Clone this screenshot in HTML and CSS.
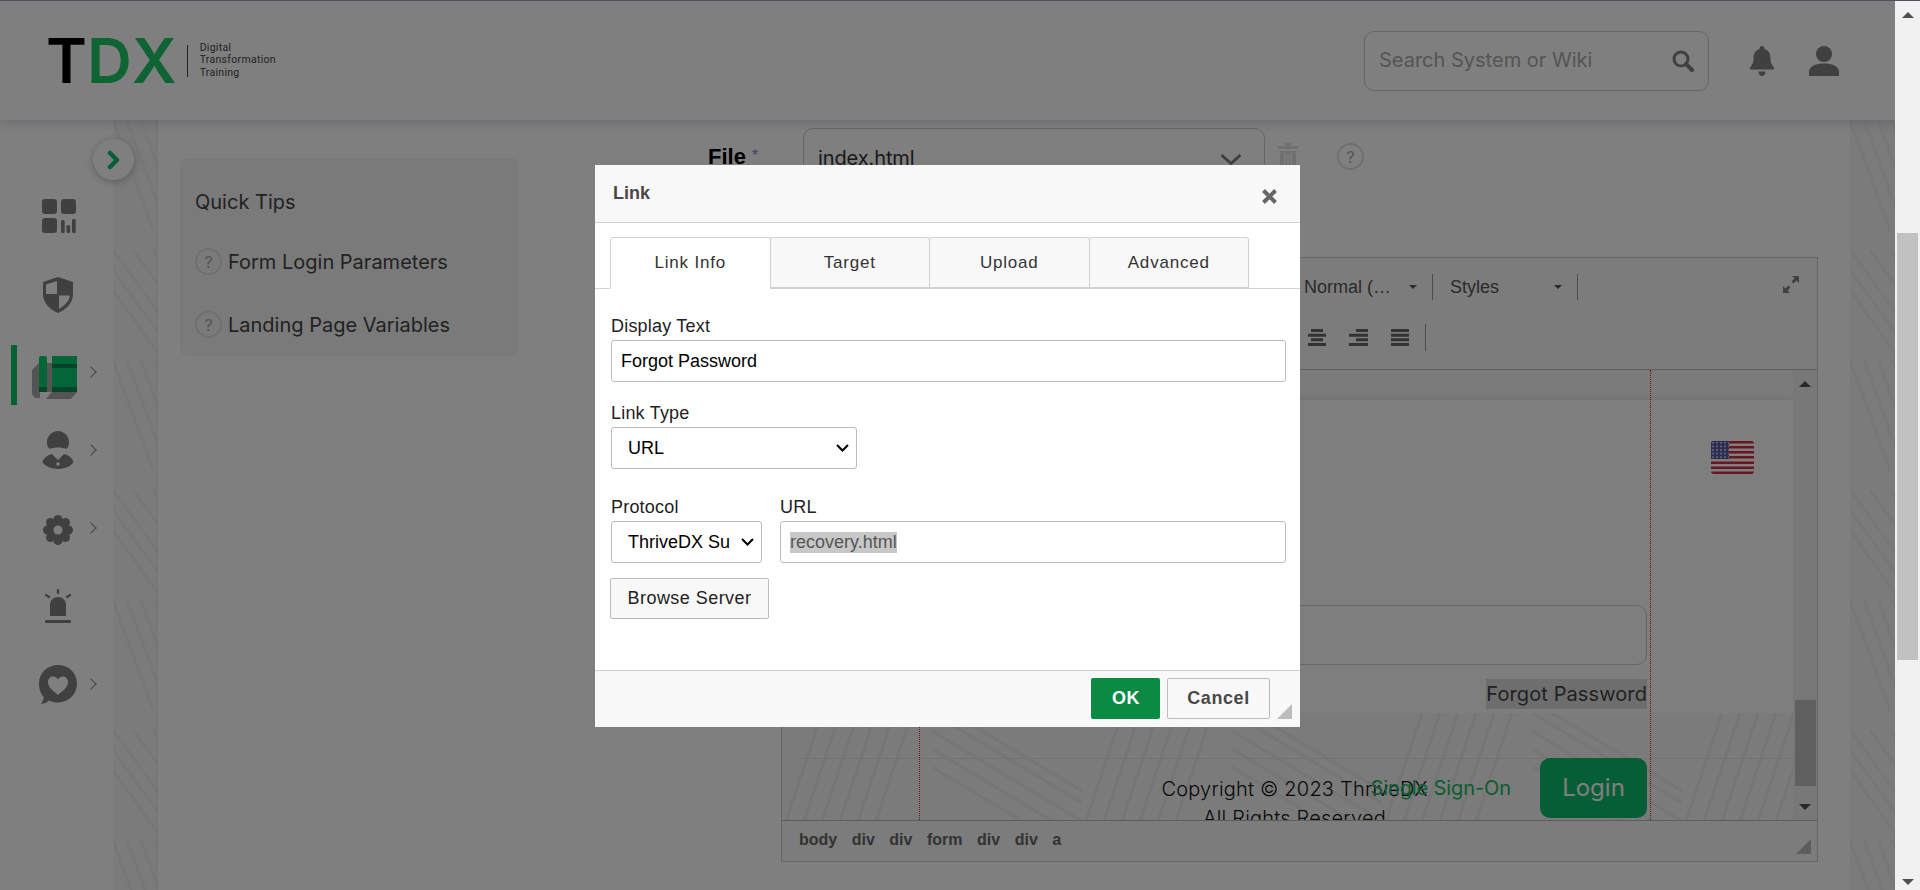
FILE: index.html
```html
<!DOCTYPE html>
<html lang="en">
<head>
  <meta charset="UTF-8">
  <title>TDX - Landing Page</title>
  <link rel="stylesheet" href="styles.css">
</head>
<body>
<div class="app">
  <div class="page">
    <header class="topbar">
      <div class="logo">
        <div class="logo-mark"><span class="logo-t">T</span><span class="logo-d">D</span><span class="logo-x">X</span></div>
        <span class="logo-divider"></span>
        <div class="logo-text">Digital<br>Transformation<br>Training</div>
      </div>
      <div class="search">
        <span class="search-text">Search System or Wiki</span>
        <svg width="22" height="22" viewBox="0 0 22 22"><circle cx="9" cy="9" r="7" fill="none" stroke="#808080" stroke-width="3"/><path d="M14 14l6 6" stroke="#808080" stroke-width="4" stroke-linecap="round"/></svg>
      </div>
      <svg class="bell" width="24" height="30" viewBox="0 0 24 30"><path d="M12 0c1.500 0 2.500 1 2.500 3 4.500 1.500 6 5 6 9.500 0 4 1 6.500 3.500 9v2H0v-2c2.500-2.500 3.500-5 3.500-9C3.500 8 5 4.500 9.500 3 9.500 1 10.500 0 12 0zM8.500 25.500h7C15.500 28 14 30 12 30s-3.500-2-3.500-4.500z" fill="#808080"/></svg>
      <svg class="user" width="30" height="30" viewBox="0 0 30 30"><circle cx="15" cy="8" r="8" fill="#808080"/><path d="M0 30v-4c0-6 7-8.500 15-8.500S30 20 30 26v4z" fill="#808080"/></svg>
    </header>

    <div class="content">
      <nav class="sidenav">
        <div class="nav-toggle"><svg width="14" height="20" viewBox="0 0 14 20"><path d="M3 3l7 7-7 7" fill="none" stroke="#0abc6a" stroke-width="4.500" stroke-linecap="round" stroke-linejoin="round"/></svg></div>
        <div class="nav-item">
          <svg class="nav-icon" width="52" height="34" viewBox="0 0 52 34"><g fill="#808080"><rect x="10" y="0" width="15" height="15" rx="3"/><rect x="29" y="0" width="15" height="15" rx="3"/><rect x="10" y="19" width="15" height="15" rx="3"/><rect x="29" y="21" width="3.700" height="13" rx="1.500"/><rect x="34.500" y="26" width="3.700" height="8" rx="1.500"/><rect x="40" y="20" width="3.700" height="14" rx="1.500"/></g></svg>
        </div>
        <div class="nav-item">
          <svg class="nav-icon shield" width="52" height="36" viewBox="0 0 52 36"><path d="M26 0l15 5v12c0 10-8 16-15 19-7-3-15-9-15-19V5z" fill="#808080"/><path d="M25 4L14 7.500V17H25zM27 18.500V32c5-3 10-7 11-13.500z" fill="#fff"/></svg>
        </div>
        <div class="nav-item is-active">
          <svg class="nav-icon book" width="52" height="44" viewBox="0 0 52 44"><path d="M7 7l-7 7v24l3 4h5zM20 36h25l-6 7H14z" fill="#a8a8a8"/><rect x="13" y="7" width="7" height="29" fill="#a8a8a8"/><rect x="7" y="0" width="8" height="36" rx="2" fill="#08cc70"/><rect x="7" y="31" width="8" height="5" fill="#068a4c"/><rect x="20" y="0" width="25" height="36" fill="#08cc70"/><rect x="20" y="8" width="25" height="4" fill="#068a4c"/><rect x="20" y="31" width="25" height="5" fill="#068a4c"/></svg>
          <span class="nav-arrow"></span>
        </div>
        <div class="nav-item">
          <svg class="nav-icon" width="52" height="38" viewBox="0 0 52 38"><path d="M26 0c6 0 11 5 11 11 0 4-1 6-3 7-2-1-5-1.500-8-1.500S20 17 18 18c-2-1-3-3-3-7 0-6 5-11 11-11z" fill="#808080"/><path d="M20 23l6 6 6-6c5 1 9 5 9.500 8-2 4-9 7-15.500 7s-13.500-3-15.500-7C11 28 15 24 20 23z" fill="#808080"/><circle cx="26" cy="33" r="1.800" fill="#fff"/></svg>
          <span class="nav-arrow"></span>
        </div>
        <div class="nav-item">
          <svg class="nav-icon gear" width="52" height="30" viewBox="0 0 52 30"><g fill="#808080"><circle cx="26" cy="15" r="11"/><circle cx="26" cy="4.500" r="4.500"/><circle cx="26" cy="25.500" r="4.500"/><circle cx="15.500" cy="15" r="4.500"/><circle cx="36.500" cy="15" r="4.500"/><circle cx="18.500" cy="7.500" r="4.500"/><circle cx="33.500" cy="7.500" r="4.500"/><circle cx="18.500" cy="22.500" r="4.500"/><circle cx="33.500" cy="22.500" r="4.500"/></g><circle cx="26" cy="15" r="4.500" fill="#fff"/></svg>
          <span class="nav-arrow"></span>
        </div>
        <div class="nav-item">
          <svg class="nav-icon" width="52" height="35" viewBox="0 0 52 35"><g fill="#808080"><path d="M18 27V16c0-5 3.500-8 8-8s8 3 8 8v11z"/><rect x="13" y="31" width="26" height="3" rx="1"/><rect x="24.800" y="0" width="2.400" height="5" rx="1"/></g><path d="M14 6l3 2M38 6l-3 2" stroke="#808080" stroke-width="2.400" stroke-linecap="round"/></svg>
        </div>
        <div class="nav-item">
          <svg class="nav-icon" width="52" height="39" viewBox="0 0 52 39"><path d="M26 0c10.500 0 19 8 19 18.500S36.500 37.500 26 37.500c-3 0-6-.6-8.500-2-2 1.500-5 3-8.500 3.500 1.500-2 2.500-4 2.700-7C8.500 29 7 24 7 18.500 7 8 15.500 0 26 0z" fill="#808080"/><path d="M26 30c-3-3-10-7-10-13 0-3.500 2.500-5.500 5.200-5.500 2 0 3.800 1 4.800 3 1-2 2.800-3 4.800-3 2.700 0 5.200 2 5.200 5.500 0 6-7 10-10 13z" fill="#fff"/></svg>
          <span class="nav-arrow"></span>
        </div>
      </nav>
      <div class="weave-strip"></div>

      <aside class="tips-col">
        <div class="tips-card">
          <h4 class="tips-title">Quick Tips</h4>
          <div class="tip"><span class="help">?</span>Form Login Parameters</div>
          <div class="tip"><span class="help">?</span>Landing Page Variables</div>
        </div>
      </aside>

      <main class="main">
        <div class="file-row">
          <label class="file-label">File <span class="req">*</span></label>
          <div class="file-select">index.html
            <svg width="22" height="11" viewBox="0 0 22 11"><path d="M1.500 1L11 9.500 20.500 1" fill="none" stroke="#808080" stroke-width="3"/></svg>
          </div>
          <svg class="trash" width="20" height="29" viewBox="0 0 20 29"><path d="M7 0h6v3h7v3H0V3h7zM2 8h16v21H2zM6 11v15h1.500V11zM9.300 11v15h1.500V11zM12.500 11v15H14V11z" fill="#e0e0e0" fill-rule="evenodd"/></svg>
          <span class="help help-top">?</span>
        </div>

        <div class="editor">
          <div class="editor-toolbar">
            <div class="tool-row tool-row-first">
              <div class="combo combo-format">Normal (…<i class="caret"></i></div>
              <div class="combo combo-styles">Styles<i class="caret"></i></div>
              <svg class="expand" width="16" height="17" viewBox="0 0 16 17"><path d="M9 0h7v7l-2.500-2.500-3 3-2-2 3-3zM0 17v-7l2.500 2.500 3-3 2 2-3 3L7 17z" fill="#808080"/></svg>
            </div>
            <div class="tool-row tool-row-second">
              <svg width="18" height="17" viewBox="0 0 18 17"><path d="M3 0h12v3H3zM0 4.700h18v3H0zM3 9.300h12v3H3zM0 14h18v3H0z" fill="#666"/></svg>
              <svg width="19" height="17" viewBox="0 0 19 17"><path d="M7 0h12v3H7zM0 4.700h19v3H0zM7 9.300h12v3H7zM0 14h19v3H0z" fill="#666"/></svg>
              <svg width="18" height="17" viewBox="0 0 18 17"><path d="M0 0h18v3H0zM0 4.700h18v3H0zM0 9.300h18v3H0zM0 14h18v3H0z" fill="#666"/></svg>
              <span class="tool-sep"></span>
            </div>
          </div>
          <div class="editor-body">
            <div class="doc">
              <div class="doc-strip"></div>
              <div class="doc-header">
                <svg class="flag" width="43" height="33" viewBox="0 0 43 33"><defs><clipPath id="flagClip"><rect width="43" height="33" rx="3"/></clipPath><pattern id="stars" width="4" height="3.600" patternUnits="userSpaceOnUse"><circle cx="2" cy="1.800" r=".8" fill="#fff"/></pattern></defs><g clip-path="url(#flagClip)"><rect width="43" height="33" fill="#fff"/><path d="M0 0h43v2.500H0zM0 5h43v2.500H0zM0 10h43v2.500H0zM0 15h43v2.500H0zM0 20.500h43V23H0zM0 25.500h43V28H0zM0 30.500h43V33H0z" fill="#d42c44"/><rect width="18" height="18" fill="#5a5aa8"/><rect width="18" height="18" fill="url(#stars)"/></g></svg>
              </div>
              <div class="doc-login">
                <div class="doc-input"></div>
                <a class="forgot">Forgot Password</a>
              </div>
              <div class="doc-footer">
                <div class="doc-actions">
                  <span class="sso">Single Sign-On</span>
                  <span class="login-btn">Login</span>
                </div>
                <div class="copyright">Copyright © 2023 ThriveDX<br>All Rights Reserved</div>
              </div>
            </div>
            <span class="guide guide-left"></span>
            <span class="guide guide-right"></span>
            <div class="doc-scroll">
              <i class="arrow-up"></i>
              <div class="doc-thumb"></div>
              <i class="arrow-down"></i>
            </div>
          </div>
          <div class="editor-status">
            <span>body</span><span>div</span><span>div</span><span>form</span><span>div</span><span>div</span><span>a</span>
            <i class="status-grip"></i>
          </div>
        </div>
      </main>
      <div class="weave-strip weave-strip-right"></div>
    </div>

    <div class="overlay"></div>

    <section class="dialog">
      <div class="dialog-head">
        <span class="dialog-title">Link</span>
        <svg class="dialog-close" width="15" height="15" viewBox="0 0 15 15"><path d="M1.500 1.500l12 12M13.500 1.500l-12 12" stroke="#666" stroke-width="4"/></svg>
      </div>
      <div class="tabs">
        <span class="tab is-active">Link Info</span>
        <span class="tab">Target</span>
        <span class="tab">Upload</span>
        <span class="tab">Advanced</span>
      </div>
      <div class="dialog-body">
        <label class="field-label">Display Text</label>
        <input class="text-input" value="Forgot Password">
        <label class="field-label label-type">Link Type</label>
        <select class="select select-type"><option>URL</option></select>
        <div class="url-row">
          <div class="url-protocol">
            <label class="field-label">Protocol</label>
            <select class="select select-protocol"><option>ThriveDX Su</option></select>
          </div>
          <div class="url-value">
            <label class="field-label">URL</label>
            <div class="text-input url-input"><span class="selected">recovery.html</span></div>
          </div>
        </div>
        <button class="browse-btn">Browse Server</button>
      </div>
      <div class="dialog-foot">
        <button class="ok-btn">OK</button>
        <button class="cancel-btn">Cancel</button>
        <i class="dialog-grip"></i>
      </div>
    </section>
  </div>

  <div class="scrollbar">
    <i class="arrow-up"></i>
    <div class="scroll-thumb"></div>
    <i class="arrow-down"></i>
  </div>
</div>
</body>
</html>
```

FILE: styles.css
```css
* {
  box-sizing: border-box;
}
html, body {
  margin: 0;
  height: 890px;
  overflow: hidden;
}
body {
  font-family: Inter, "Liberation Sans", sans-serif;
  color: #444;
  background: #fff;
}
.app {
  display: flex;
  height: 890px;
  border-top: 1px solid #50505e;
}
.page {
  position: relative;
  flex: 1;
  min-width: 0;
  overflow: hidden;
}
.overlay {
  position: absolute;
  z-index: 4;
  inset: 0;
  background: rgba(0, 0, 0, .5);
}

/* window scrollbar */
.scrollbar {
  width: 25px;
  background: #f1f1f1;
  display: flex;
  flex-direction: column;
  align-items: center;
  padding: 11px 2px 5px;
}
.scroll-thumb {
  width: 21px;
  height: 427px;
  margin-top: 215px;
  background: #c1c1c1;
}
.arrow-up, .arrow-down {
  display: block;
  width: 0;
  height: 0;
  border-left: 6px solid transparent;
  border-right: 6px solid transparent;
}
.arrow-up {
  border-bottom: 6px solid #505050;
}
.arrow-down {
  margin-top: auto;
  border-top: 6px solid #505050;
}

/* header */
.topbar {
  position: relative;
  z-index: 2;
  height: 119px;
  display: flex;
  align-items: center;
  padding: 0 56px 0 46px;
  background: #fff;
  box-shadow: 0 3px 10px rgba(60, 60, 110, .2);
}
.logo {
  display: flex;
  align-items: center;
}
.logo-mark {
  display: flex;
  font-size: 62px;
  font-weight: 600;
  line-height: 44px;
  height: 44px;
  color: #000;
}
.logo-t {
  width: 41px;
}
.logo-d, .logo-x {
  color: #1ec868;
}
.logo-d {
  width: 45px;
}
.logo-divider {
  width: 1px;
  height: 32px;
  margin-left: 10px;
  background: #444;
}
.logo-text {
  margin-left: 12px;
  font-family: Roboto, sans-serif;
  font-size: 10.500px;
  line-height: 12.500px;
  letter-spacing: .3px;
  color: #444;
}
.search {
  margin-left: auto;
  width: 345px;
  height: 60px;
  display: flex;
  align-items: center;
  justify-content: space-between;
  padding: 0 14px;
  border: 1px solid #ccc;
  border-radius: 10px;
  font-size: 20px;
  color: #aaa;
}
.search-text {
  margin-top: -2px;
}
.bell {
  margin-left: 41px;
}
.user {
  margin-left: 35px;
}

.content {
  display: flex;
  height: 770px;
}

/* side nav */
.sidenav {
  position: relative;
  width: 113px;
  padding-top: 57px;
  background: #fff;
  flex: none;
}
.nav-toggle {
  position: absolute;
  z-index: 3;
  top: 19px;
  left: 93px;
  width: 41px;
  height: 41px;
  border-radius: 50%;
  background: #fff;
  box-shadow: 0 2px 8px rgba(0, 0, 0, .25);
  display: flex;
  align-items: center;
  justify-content: center;
}
.nav-item {
  position: relative;
  height: 78px;
  display: flex;
  align-items: center;
  padding-left: 32px;
}
.nav-icon {
  flex: none;
}
.nav-icon.book {
  margin-top: 11px;
}
.nav-icon.gear {
  margin-top: 4px;
}
.nav-icon.shield {
  margin-top: 2px;
}
.is-active.nav-item::before {
  content: "";
  position: absolute;
  left: 11px;
  top: 12px;
  width: 6px;
  height: 60px;
  background: #06c46a;
}
.nav-arrow {
  width: 8px;
  height: 8px;
  margin-left: 3px;
  border-top: 1px solid #888;
  border-right: 1px solid #888;
  transform: rotate(45deg);
}
.weave-strip {
  width: 45px;
  flex: none;
  background-color: #f6f6f6;
  background-image: url("data:image/svg+xml,%3Csvg xmlns='http://www.w3.org/2000/svg' width='240' height='240'%3E%3Cg stroke='%23efefef' stroke-width='3' fill='none'%3E%3Cpath d='M0 0L40 110M14 0L54 110M28 0L68 110M42 0L82 110M56 0L96 110M70 0L110 110'/%3E%3Cpath d='M120 0L240 70M120 16L240 86M120 32L240 102M120 48L240 118'/%3E%3Cpath d='M0 130L80 240M0 150L65 240M0 170L50 240M20 130L100 240M40 130L115 240'/%3E%3Cpath d='M130 130V240M148 130V240M166 130V240M184 130V240M202 130V240M220 130V240'/%3E%3C/g%3E%3C/svg%3E");
}
.weave-strip-right {
  flex: 1;
}

/* quick tips */
.tips-col {
  width: 384px;
  flex: none;
  padding: 38px 22px 0;
  background: #fff;
  box-shadow: 3px 0 8px rgba(60, 60, 110, .15);
}
.tips-card {
  width: 339px;
  height: 198px;
  padding: 31px 15px 0;
  border-radius: 8px;
  background: #f4f4f4;
}
.tips-title {
  margin: 0 0 33px;
  font-size: 20px;
  line-height: 26px;
  font-weight: 400;
}
.tip {
  display: flex;
  align-items: center;
  height: 27px;
  margin-bottom: 36px;
  font-size: 20px;
}
.help {
  display: inline-flex;
  flex: none;
  align-items: center;
  justify-content: center;
  width: 27px;
  height: 27px;
  margin-right: 6px;
  border: 2px solid #e0e0e0;
  border-radius: 50%;
  font-size: 16px;
  color: #aaa;
}

/* main form */
.main {
  width: 1308px;
  flex: none;
  padding: 8px 0 0 166px;
  background: #fff;
  color: #000;
}
.file-row {
  display: flex;
  height: 60px;
  align-items: flex-start;
}
.file-label {
  width: 95px;
  margin-top: 16px;
  font-family: "Liberation Sans", sans-serif;
  font-size: 22px;
  font-weight: 700;
}
.req {
  font-size: 16px;
  font-weight: 400;
  color: #88a;
  vertical-align: 3px;
}
.file-select {
  position: relative;
  width: 462px;
  height: 60px;
  display: flex;
  align-items: flex-start;
  justify-content: space-between;
  padding: 17px 22px 0 14px;
  border: 1px solid #ccc;
  border-radius: 10px;
  font-size: 20px;
  letter-spacing: -.1px;
  color: #333;
}
.file-select svg {
  margin-top: 8px;
}
.trash {
  margin: 15px 0 0 13px;
}
.help-top {
  margin: 15px 0 0 39px;
}

.editor {
  width: 1037px;
  height: 605px;
  margin: 69px 0 0 73px;
  display: flex;
  flex-direction: column;
  border: 1px solid #ccc;
  color: #444;
}
.editor-toolbar {
  height: 112px;
  flex: none;
  background: #f8f8f8;
  border-bottom: 1px solid #bbb;
  font-family: "Liberation Sans", sans-serif;
}
.tool-row {
  display: flex;
  align-items: center;
}
.tool-row-first {
  height: 26px;
  margin-top: 16px;
  padding-left: 522px;
  font-size: 18px;
}
.tool-row-second {
  height: 27px;
  margin-top: 24px;
  padding-left: 526px;
  gap: 23px;
}
.combo {
  position: relative;
  height: 26px;
  display: flex;
  align-items: center;
  justify-content: space-between;
  border-right: 1px solid #999;
  color: #555;
}
.combo-format {
  width: 129px;
  padding-right: 15px;
}
.combo-styles {
  width: 145px;
  padding: 0 15px 0 17px;
}
.caret {
  width: 0;
  height: 0;
  border-left: 4px solid transparent;
  border-right: 4px solid transparent;
  border-top: 4px solid #555;
}
.expand {
  margin: -6px 0 0 205px;
}
.tool-sep {
  width: 1px;
  height: 27px;
  margin-left: -7px;
  background: #999;
}

.editor-body {
  position: relative;
  flex: 1;
  min-height: 0;
  display: flex;
  overflow: hidden;
}
.doc {
  flex: 1;
  min-width: 0;
  display: flex;
  flex-direction: column;
}
.doc-strip {
  height: 30px;
  flex: none;
  background: #f6f6f6;
}
.doc-header {
  height: 119px;
  flex: none;
  display: flex;
  align-items: center;
  justify-content: flex-end;
  padding: 0 39px 4px 0;
  background: #fdfdfd;
  box-shadow: 0 2px 8px rgba(60, 60, 110, .25);
}
.doc-login {
  height: 194px;
  flex: none;
  padding: 86px 146px 0 140px;
  background: #fdfdfd;
  display: flex;
  flex-direction: column;
  align-items: flex-end;
}
.doc-input {
  width: 100%;
  height: 60px;
  border: 1px solid #ccc;
  border-radius: 10px;
}
.forgot {
  margin-top: 14px;
  padding: 2px 0;
  font-size: 20px;
  line-height: 26px;
  letter-spacing: .1px;
  background: #ddd;
  color: #444;
}
.doc-footer {
  position: relative;
  flex: 1;
  background-color: #f7f7f7;
  background-image: url("data:image/svg+xml,%3Csvg xmlns='http://www.w3.org/2000/svg' width='300' height='240'%3E%3Cg stroke='%23ededed' stroke-width='3.500' fill='none'%3E%3Cpath d='M0 120L40 0M18 120L58 0M36 120L76 0M54 120L94 0M72 120L112 0M90 120L130 0'/%3E%3Cpath d='M150 0L300 90M150 18L300 108M150 36L300 126M150 54L300 144M170 0L300 78'/%3E%3Cpath d='M10 120L30 240M30 120L50 240M50 120L70 240M70 120L90 240M90 120L110 240'/%3E%3Cpath d='M140 240L240 130M160 240L260 130M180 240L280 130M200 240L300 130'/%3E%3C/g%3E%3C/svg%3E");
}
.doc-actions {
  position: absolute;
  z-index: 1;
  top: 45px;
  right: 146px;
  display: flex;
  align-items: center;
  gap: 29px;
}
.sso {
  margin-top: -1px;
  font-size: 20px;
  letter-spacing: -.1px;
  color: #14bc64;
}
.login-btn {
  width: 107px;
  height: 60px;
  display: flex;
  align-items: center;
  justify-content: center;
  padding-bottom: 2px;
  border-radius: 10px;
  background: #0abc6a;
  color: #fff;
  font-size: 24px;
}
.doc-footer::before {
  content: "";
  position: absolute;
  left: 16px;
  right: 0;
  top: 45px;
  height: 1px;
  background: #e6e6e6;
}
.copyright {
  position: absolute;
  top: 62px;
  left: 14px;
  right: 0;
  text-align: center;
  font-size: 20px;
  font-weight: 300;
  line-height: 29px;
  letter-spacing: .2px;
  color: #111;
}
.guide {
  position: absolute;
  top: 0;
  bottom: 0;
  width: 0;
  border-left: 1px dotted #e02020;
}
.guide-left {
  left: 137px;
}
.guide-right {
  left: 868px;
}
.doc-scroll {
  width: 24px;
  flex: none;
  display: flex;
  flex-direction: column;
  align-items: center;
  padding: 11px 0 10px;
  background: #f1f1f1;
}
.doc-thumb {
  width: 21px;
  height: 86px;
  margin-top: auto;
  background: #c1c1c1;
}
.doc-scroll .arrow-down {
  margin-top: 18px;
}
.editor-status {
  position: relative;
  height: 41px;
  flex: none;
  display: flex;
  align-items: center;
  gap: 14.500px;
  padding: 0 0 2px 17px;
  border-top: 1px solid #bbb;
  background: #f8f8f8;
  font-family: "Liberation Sans", sans-serif;
  font-size: 16px;
  font-weight: 700;
  color: #666;
}
.status-grip {
  position: absolute;
  right: 6px;
  bottom: 7px;
  width: 0;
  height: 0;
  border-left: 15px solid transparent;
  border-bottom: 15px solid #bbb;
}

/* link dialog */
.dialog {
  position: absolute;
  z-index: 5;
  left: 595px;
  top: 164px;
  width: 705px;
  height: 562px;
  display: flex;
  flex-direction: column;
  background: #fff;
  font-family: "Liberation Sans", sans-serif;
  color: #000;
}
.dialog-head {
  height: 58px;
  flex: none;
  display: flex;
  align-items: center;
  justify-content: space-between;
  padding: 0 23px 0 18px;
  background: #f8f8f8;
  border-bottom: 1px solid #d1d1d1;
}
.dialog-title {
  font-size: 18px;
  font-weight: 700;
  color: #484848;
}
.dialog-close {
  margin-top: 5px;
}
.tabs {
  height: 66px;
  flex: none;
  display: flex;
  align-items: flex-end;
  padding: 0 0 0 15px;
  border-bottom: 1px solid #d1d1d1;
}
.tab {
  width: 160.500px;
  height: 52px;
  margin-bottom: -1px;
  margin-right: -1px;
  display: flex;
  align-items: center;
  justify-content: center;
  border: 1px solid #d1d1d1;
  border-bottom: 2px solid #d1d1d1;
  border-radius: 3px 3px 0 0;
  background: #f8f8f8;
  font-size: 17px;
  letter-spacing: .8px;
  color: #333;
}
.tab.is-active {
  background: #fff;
  border-bottom: 2px solid #fff;
}
.dialog-body {
  flex: 1;
  padding: 27px 14px 0 16px;
}
.field-label {
  display: block;
  height: 21px;
  margin-bottom: 3px;
  font-size: 18px;
  line-height: 21px;
  letter-spacing: .2px;
  color: #222;
}
.text-input {
  display: block;
  width: 100%;
  height: 42px;
  padding: 0 9px;
  border: 1px solid #bcbcbc;
  border-radius: 3px;
  font-family: inherit;
  font-size: 18px;
  line-height: 40px;
  color: #000;
  background: #fff;
  outline: 0;
}
.select {
  display: block;
  height: 42px;
  padding: 0 30px 0 16px;
  border: 1px solid #bcbcbc;
  border-radius: 3px;
  appearance: none;
  background: #fff url("data:image/svg+xml,%3Csvg xmlns='http://www.w3.org/2000/svg' width='13' height='8'%3E%3Cpath d='M1 1l5.500 5.500L12 1' fill='none' stroke='%23000' stroke-width='2'/%3E%3C/svg%3E") no-repeat right 7px center;
  font-family: inherit;
  font-size: 18px;
  color: #000;
}
.label-type {
  margin-top: 21px;
}
.select-type {
  width: 246px;
}
.url-row {
  display: flex;
  gap: 18px;
  margin-top: 28px;
}
.url-protocol {
  width: 151px;
  flex: none;
}
.url-value {
  flex: 1;
}
.select-protocol {
  width: 151px;
}
.selected {
  display: inline-block;
  background: #c8c8c8;
  line-height: 21px;
  color: #555;
}
.browse-btn {
  display: block;
  width: 159px;
  height: 41px;
  margin: 15px 0 0 -1px;
  border: 1px solid #bcbcbc;
  border-radius: 2px;
  background: #f8f8f8;
  font-family: inherit;
  font-size: 18px;
  letter-spacing: .45px;
  color: #222;
}
.dialog-foot {
  position: relative;
  height: 57px;
  flex: none;
  display: flex;
  justify-content: flex-end;
  gap: 7px;
  padding: 7px 30px 0 0;
  background: #f8f8f8;
  border-top: 1px solid #d1d1d1;
}
.ok-btn, .cancel-btn {
  height: 41px;
  border-radius: 2px;
  font-family: inherit;
  font-size: 18px;
  font-weight: 700;
  letter-spacing: .6px;
}
.ok-btn {
  width: 69px;
  padding-right: 5px;
  border: 0;
  background: #0b8a43;
  color: #fff;
}
.cancel-btn {
  width: 103px;
  border: 1px solid #bcbcbc;
  background: #f8f8f8;
  color: #484848;
}
.dialog-grip {
  position: absolute;
  right: 8px;
  bottom: 8px;
  width: 0;
  height: 0;
  border-left: 15px solid transparent;
  border-bottom: 15px solid #bcbcbc;
}
```
